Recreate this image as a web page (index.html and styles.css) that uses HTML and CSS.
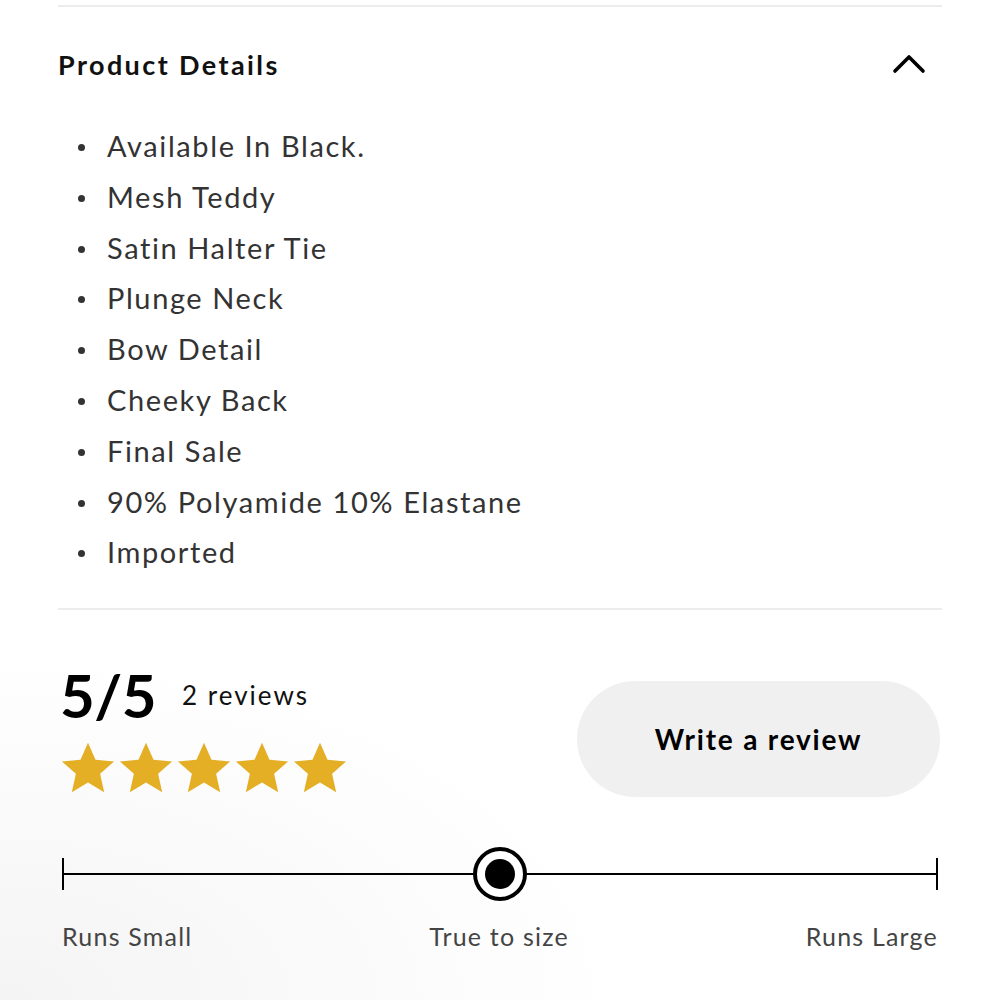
FILE: index.html
```html
<!DOCTYPE html>
<html>
<head>
<meta charset="utf-8">
<link rel="stylesheet" href="styles.css">
</head>
<body>
<div class="page">
  <section class="details">
    <div class="details-head">
      <h2 class="details-title">Product Details</h2>
      <svg class="chevron" width="34" height="24" viewBox="0 0 34 24"><path d="M3 19 L17 5 L31 19" fill="none" stroke="#000" stroke-width="3.6" stroke-linecap="round" stroke-linejoin="round"/></svg>
    </div>
    <ul class="details-list">
      <li>Available In Black.</li>
      <li>Mesh Teddy</li>
      <li>Satin Halter Tie</li>
      <li>Plunge Neck</li>
      <li>Bow Detail</li>
      <li>Cheeky Back</li>
      <li>Final Sale</li>
      <li>90% Polyamide 10% Elastane</li>
      <li>Imported</li>
    </ul>
  </section>
  <section class="reviews">
    <div class="score">
      <div class="score-top">
        <span class="score-num">5/5</span>
        <span class="score-count">2 reviews</span>
      </div>
      <div class="stars">
        <svg viewBox="0 0 24 24" class="star"><path d="M12 1.5l3.1 7.1 7.7.7-5.8 5.1 1.7 7.6L12 18l-6.7 4 1.7-7.6-5.8-5.1 7.7-.7z"/></svg>
        <svg viewBox="0 0 24 24" class="star"><path d="M12 1.5l3.1 7.1 7.7.7-5.8 5.1 1.7 7.6L12 18l-6.7 4 1.7-7.6-5.8-5.1 7.7-.7z"/></svg>
        <svg viewBox="0 0 24 24" class="star"><path d="M12 1.5l3.1 7.1 7.7.7-5.8 5.1 1.7 7.6L12 18l-6.7 4 1.7-7.6-5.8-5.1 7.7-.7z"/></svg>
        <svg viewBox="0 0 24 24" class="star"><path d="M12 1.5l3.1 7.1 7.7.7-5.8 5.1 1.7 7.6L12 18l-6.7 4 1.7-7.6-5.8-5.1 7.7-.7z"/></svg>
        <svg viewBox="0 0 24 24" class="star"><path d="M12 1.5l3.1 7.1 7.7.7-5.8 5.1 1.7 7.6L12 18l-6.7 4 1.7-7.6-5.8-5.1 7.7-.7z"/></svg>
      </div>
    </div>
    <button class="write-btn">Write a review</button>
  </section>
  <section class="fit">
    <div class="fit-track">
      <span class="tick"></span>
      <span class="line"></span>
      <span class="tick"></span>
      <span class="knob"><span class="knob-dot"></span></span>
    </div>
    <div class="fit-labels">
      <span>Runs Small</span>
      <span>True to size</span>
      <span>Runs Large</span>
    </div>
  </section>
</div>
</body>
</html>
```

FILE: styles.css
```css
html, body {
  margin: 0;
  padding: 0;
}
body {
  width: 1000px;
  height: 1000px;
  overflow: hidden;
  background: radial-gradient(ellipse 900px 500px at 0% 100%, #f4f4f4 0%, #ffffff 70%);
  font-family: "Lato", "Noto Sans", sans-serif;
  color: #333;
}
.page {
  padding: 0 58px;
}
.details {
  border-top: 2px solid #ececec;
  margin-top: 5px;
  border-bottom: 2px solid #ececec;
  padding-bottom: 30px;
}
.details-head {
  display: flex;
  align-items: center;
  justify-content: space-between;
  height: 114px;
  padding-right: 16px;
}
.details-title {
  margin: 0;
  font-size: 27px;
  font-weight: 700;
  color: #111;
  letter-spacing: 2.4px;
}
.chevron {
  display: block;
}
.details-list {
  margin: 0;
  padding: 0 0 0 49px;
  list-style: none;
}
.details-list li {
  position: relative;
  font-size: 29px;
  line-height: 50.8px;
  color: #333;
  letter-spacing: 1.6px;
}
.details-list li::before {
  content: "";
  position: absolute;
  left: -29px;
  top: 23px;
  width: 7px;
  height: 7px;
  border-radius: 50%;
  background: #333;
}
.reviews {
  display: flex;
  align-items: center;
  justify-content: space-between;
  padding: 53px 0 0 4px;
}
.score-top {
  display: flex;
  align-items: center;
  gap: 26px;
}
.score-num {
  font-size: 60px;
  font-weight: 700;
  color: #000;
  letter-spacing: -0.5px;
  line-height: 64px;
  margin-left: -2px;
}
.score-count {
  font-size: 26px;
  color: #111;
  letter-spacing: 2px;
}
.stars {
  display: flex;
  gap: 0;
  margin-top: 12px;
  margin-left: -3px;
}
.star {
  width: 58px;
  height: 58px;
  fill: #E4AE25;
}
.write-btn {
  width: 363px;
  height: 116px;
  border: none;
  border-radius: 58px;
  background: #f0f0f0;
  font-family: inherit;
  font-size: 28px;
  font-weight: 700;
  color: #000;
  letter-spacing: 1.8px;
  margin-right: 2px;
  margin-top: 17px;
}
.fit {
  padding: 49px 4px 0 4px;
}
.fit-track {
  position: relative;
  display: flex;
  align-items: center;
  height: 56px;
}
.tick {
  width: 2px;
  height: 32px;
  background: #000;
}
.line {
  flex: 1;
  height: 2px;
  background: #000;
}
.knob {
  position: absolute;
  left: 50%;
  top: 50%;
  transform: translate(-50%, -50%);
  width: 46px;
  height: 46px;
  border: 4px solid #000;
  border-radius: 50%;
  background: #fff;
  display: flex;
  align-items: center;
  justify-content: center;
}
.knob-dot {
  width: 30px;
  height: 30px;
  border-radius: 50%;
  background: #000;
}
.fit-labels {
  display: flex;
  justify-content: space-between;
  margin-top: 19px;
  font-size: 25px;
  color: #444;
  letter-spacing: 1.2px;
}
```
